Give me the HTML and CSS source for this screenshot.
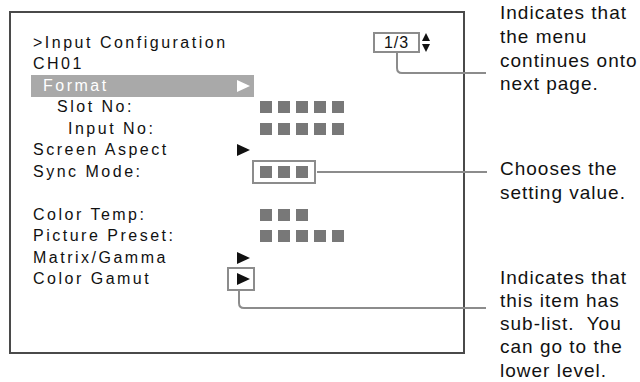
FILE: index.html
```html
<!DOCTYPE html>
<html lang="en">
<head>
    <meta charset="UTF-8">
    <meta name="viewport" content="width=device-width, initial-scale=1.0">
    <title>Input Configuration Menu</title>
    <link rel="stylesheet" href="styles.css">
</head>
<body>

<div class="figure">
    <div class="screen">
        <div class="row">
            <span>&gt;Input Configuration</span>
            <span class="page">1/3</span>
            <span class="scroll"><i class="up"></i><i class="down"></i></span>
        </div>
        <div class="row">CH01</div>
        <div class="row selected">
            <span class="label">Format</span>
            <span class="arrow"></span>
        </div>
        <div class="row">
            <span class="label sub1">Slot No:</span>
            <span class="blocks"><i></i><i></i><i></i><i></i><i></i></span>
        </div>
        <div class="row">
            <span class="label sub2">Input No:</span>
            <span class="blocks"><i></i><i></i><i></i><i></i><i></i></span>
        </div>
        <div class="row">
            <span class="label">Screen Aspect</span>
            <span class="arrow"></span>
        </div>
        <div class="row">
            <span class="label">Sync Mode:</span>
            <span class="blocks framed"><i></i><i></i><i></i></span>
        </div>
        <div class="row"></div>
        <div class="row">
            <span class="label">Color Temp:</span>
            <span class="blocks"><i></i><i></i><i></i></span>
        </div>
        <div class="row">
            <span class="label">Picture Preset:</span>
            <span class="blocks"><i></i><i></i><i></i><i></i><i></i></span>
        </div>
        <div class="row">
            <span class="label">Matrix/Gamma</span>
            <span class="arrow"></span>
        </div>
        <div class="row">
            <span class="label short">Color Gamut</span>
            <span class="arrow-box"><span class="arrow"></span></span>
        </div>
    </div>

    <div class="notes">
        <p class="note first">Indicates that<br>the menu<br>continues onto<br>next page.</p>
        <p class="note second">Chooses the<br>setting value.</p>
        <p class="note third">Indicates that<br>this item has<br>sub-list.&nbsp; You<br>can go to the<br>lower level.</p>
    </div>

    <!-- leader lines from the marked items to the notes -->
    <svg class="leaders" width="640" height="382" viewBox="0 0 640 382">
        <path d="M397 53 V68 Q397 73 402 73 H486"/>
        <path d="M317 172 H487"/>
        <path d="M239 291 V303 Q239 308 244 308 H486"/>
    </svg>
</div>

</body>
</html>
```

FILE: styles.css
```css
body {
    margin: 0;
    background-color: #fff;
    font-family: "Liberation Sans", Arial, sans-serif;
    color: #111;
    overflow: hidden;
}

.figure {
    position: relative;
    display: flex;
    align-items: flex-start;
    width: 640px;
    height: 382px;
    padding-left: 9px;
    box-sizing: border-box;
}

.screen {
    width: 456px;
    height: 343px;
    margin-top: 11px;
    padding: 19px 33px 0 22px;
    border: 2px solid #4a4a4a;
    box-sizing: border-box;
    font-size: 16px;
    letter-spacing: 2.5px;
}

.row {
    display: flex;
    align-items: center;
    height: 21.5px;
    white-space: nowrap;
}

.label {
    width: 204px;
    flex-shrink: 0;
    box-sizing: border-box;
}

.label.sub1 {
    padding-left: 24px;
}

.label.sub2 {
    padding-left: 35px;
}

.label.short {
    width: 194px;
}

.selected {
    width: 223px;
    margin-left: -2px;
    padding-left: 12px;
    box-sizing: border-box;
    background-color: #a9a9a9;
    color: #fff;
}

.selected .label {
    width: 194px;
}

.arrow {
    width: 0;
    height: 0;
    border-top: 6px solid transparent;
    border-bottom: 6px solid transparent;
    border-left: 13px solid #111;
}

.selected .arrow {
    border-left-color: #fff;
}

.arrow-box {
    display: flex;
    align-items: center;
    width: 28px;
    height: 24px;
    padding: 0 3px 0 8px;
    border: 2px solid #8c8c8c;
    box-sizing: border-box;
}

.blocks {
    display: flex;
    gap: 6px;
    margin-left: 23px;
}

.blocks i {
    width: 12px;
    height: 12px;
    background-color: #787878;
}

.blocks.framed {
    align-items: center;
    height: 24px;
    margin-left: 15px;
    padding: 0 6px;
    border: 2px solid #8c8c8c;
    box-sizing: border-box;
}

.page {
    width: 47px;
    height: 21px;
    margin-left: auto;
    border: 2px solid #8c8c8c;
    box-sizing: border-box;
    text-align: center;
    line-height: 17px;
    letter-spacing: 1px;
}

.scroll {
    display: flex;
    flex-direction: column;
    gap: 3px;
    margin-left: 2px;
}

.scroll i {
    width: 0;
    height: 0;
    border-left: 4px solid transparent;
    border-right: 4px solid transparent;
}

.scroll .up {
    border-bottom: 8px solid #111;
}

.scroll .down {
    border-top: 8px solid #111;
}

.notes {
    margin-left: 35px;
    font-size: 19px;
    line-height: 23.75px;
    letter-spacing: 1px;
    white-space: nowrap;
}

.note {
    margin: 0;
}

.note.first {
    margin-top: 1px;
}

.note.second {
    margin-top: 61px;
}

.note.third {
    margin-top: 61px;
    line-height: 23.3px;
}

.leaders {
    position: absolute;
    top: 0;
    left: 0;
    pointer-events: none;
}

.leaders path {
    fill: none;
    stroke: #8c8c8c;
    stroke-width: 2;
}
```
